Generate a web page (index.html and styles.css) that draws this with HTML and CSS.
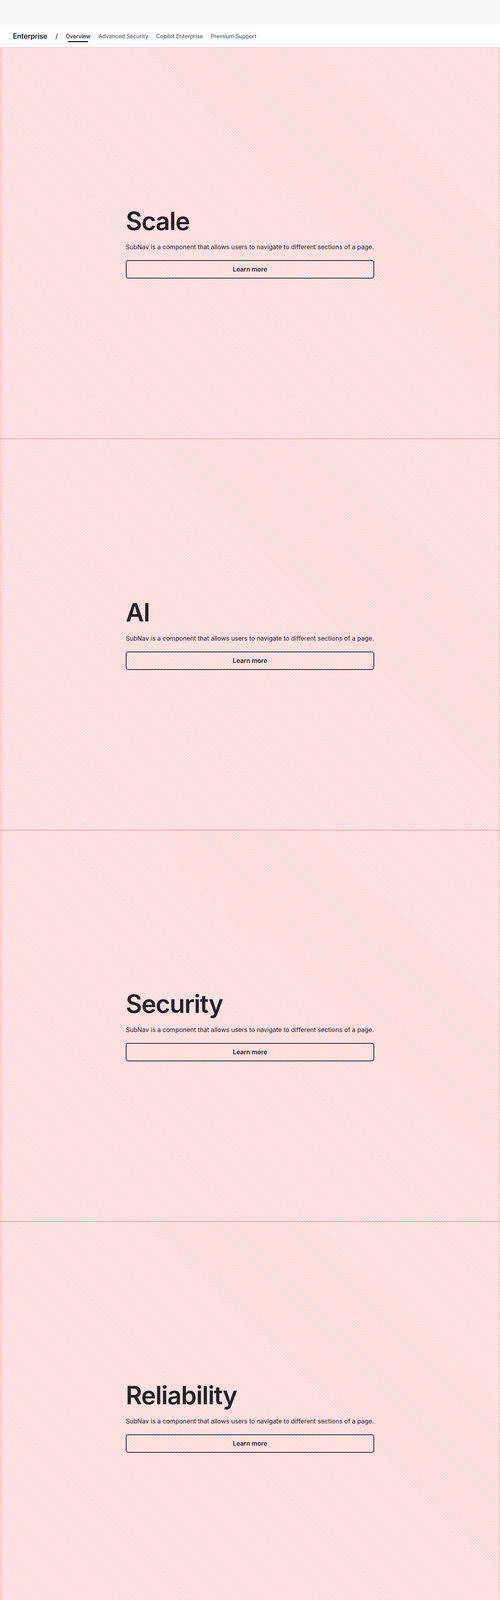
FILE: index.html
```html
<!DOCTYPE html>
<html lang="en">
<head>
<meta charset="utf-8">
<title>SubNav</title>
<link rel="stylesheet" href="styles.css">
</head>
<body>
<div class="topbar"></div>
<nav class="subnav">
  <a class="subnav-heading" href="#">Enterprise</a>
  <span class="subnav-sep">/</span>
  <ul class="subnav-links">
    <li><a class="subnav-link is-active" href="#">Overview</a></li>
    <li><a class="subnav-link" href="#">Advanced Security</a></li>
    <li><a class="subnav-link" href="#">Copilot Enterprise</a></li>
    <li><a class="subnav-link" href="#">Premium Support</a></li>
  </ul>
</nav>
<main>
  <section class="panel">
    <div class="panel-content">
      <h2 class="panel-title">Scale</h2>
      <p class="panel-text">SubNav is a component that allows users to navigate to different sections of a page.</p>
      <a class="panel-btn" href="#">Learn more</a>
    </div>
  </section>
  <section class="panel">
    <div class="panel-content">
      <h2 class="panel-title">AI</h2>
      <p class="panel-text">SubNav is a component that allows users to navigate to different sections of a page.</p>
      <a class="panel-btn" href="#">Learn more</a>
    </div>
  </section>
  <section class="panel">
    <div class="panel-content">
      <h2 class="panel-title">Security</h2>
      <p class="panel-text">SubNav is a component that allows users to navigate to different sections of a page.</p>
      <a class="panel-btn" href="#">Learn more</a>
    </div>
  </section>
  <section class="panel">
    <div class="panel-content">
      <h2 class="panel-title">Reliability</h2>
      <p class="panel-text">SubNav is a component that allows users to navigate to different sections of a page.</p>
      <a class="panel-btn" href="#">Learn more</a>
    </div>
  </section>
</main>
</body>
</html>
```
FILE: styles.css
```css
* { box-sizing: border-box; }
html, body { margin: 0; padding: 0; background: #ffffff; }
body {
  font-family: Inter, "Noto Sans", "Liberation Sans", sans-serif;
  color: #1f2328;
}
.topbar {
  height: 64px;
  background: #f6f8fa;
}
.subnav {
  height: 57px;
  display: flex;
  align-items: center;
  padding-left: 33px;
  background: #ffffff;
}
.subnav-heading {
  font-size: 18px;
  font-weight: 600;
  color: #1f2328;
  text-decoration: none;
  letter-spacing: -0.2px;
}
.subnav-sep {
  font-size: 18px;
  color: #1f2328;
  margin: 0 20px 0 21px;
}
.subnav-links {
  list-style: none;
  margin: 0;
  padding: 0;
  display: flex;
  gap: 20px;
}
.subnav-link {
  position: relative;
  display: block;
  font-size: 14px;
  font-weight: 500;
  color: #59636e;
  text-decoration: none;
  line-height: 20px;
}
.subnav-link.is-active { color: #1f2328; }
.subnav-link.is-active::after {
  content: "";
  position: absolute;
  left: 6px;
  right: 6px;
  bottom: -5px;
  height: 3px;
  border-radius: 2px;
  background: #1f2328;
}
.panel {
  height: 1002px;
  border: 1px solid #ffa3a3;
  background: repeating-linear-gradient(45deg, #ffd9d9 0 3px, #ffe6e6 3px 5.66px);
  display: flex;
  align-items: center;
  justify-content: center;
}
.panel-content {
  width: 636px;
  display: flex;
  flex-direction: column;
}
.panel-title {
  margin: 0;
  font-size: 64px;
  font-weight: 600;
  line-height: 1.1;
  letter-spacing: -1.5px;
  color: #1f2328;
}
.panel-text {
  margin: 18px 0 22px;
  font-size: 16px;
  line-height: 24px;
  color: #1f2328;
}
.panel-btn {
  display: flex;
  align-items: center;
  justify-content: center;
  height: 47px;
  border: 2px solid #1f2328;
  border-radius: 6px;
  font-size: 16px;
  font-weight: 600;
  color: #1f2328;
  text-decoration: none;
}
```
